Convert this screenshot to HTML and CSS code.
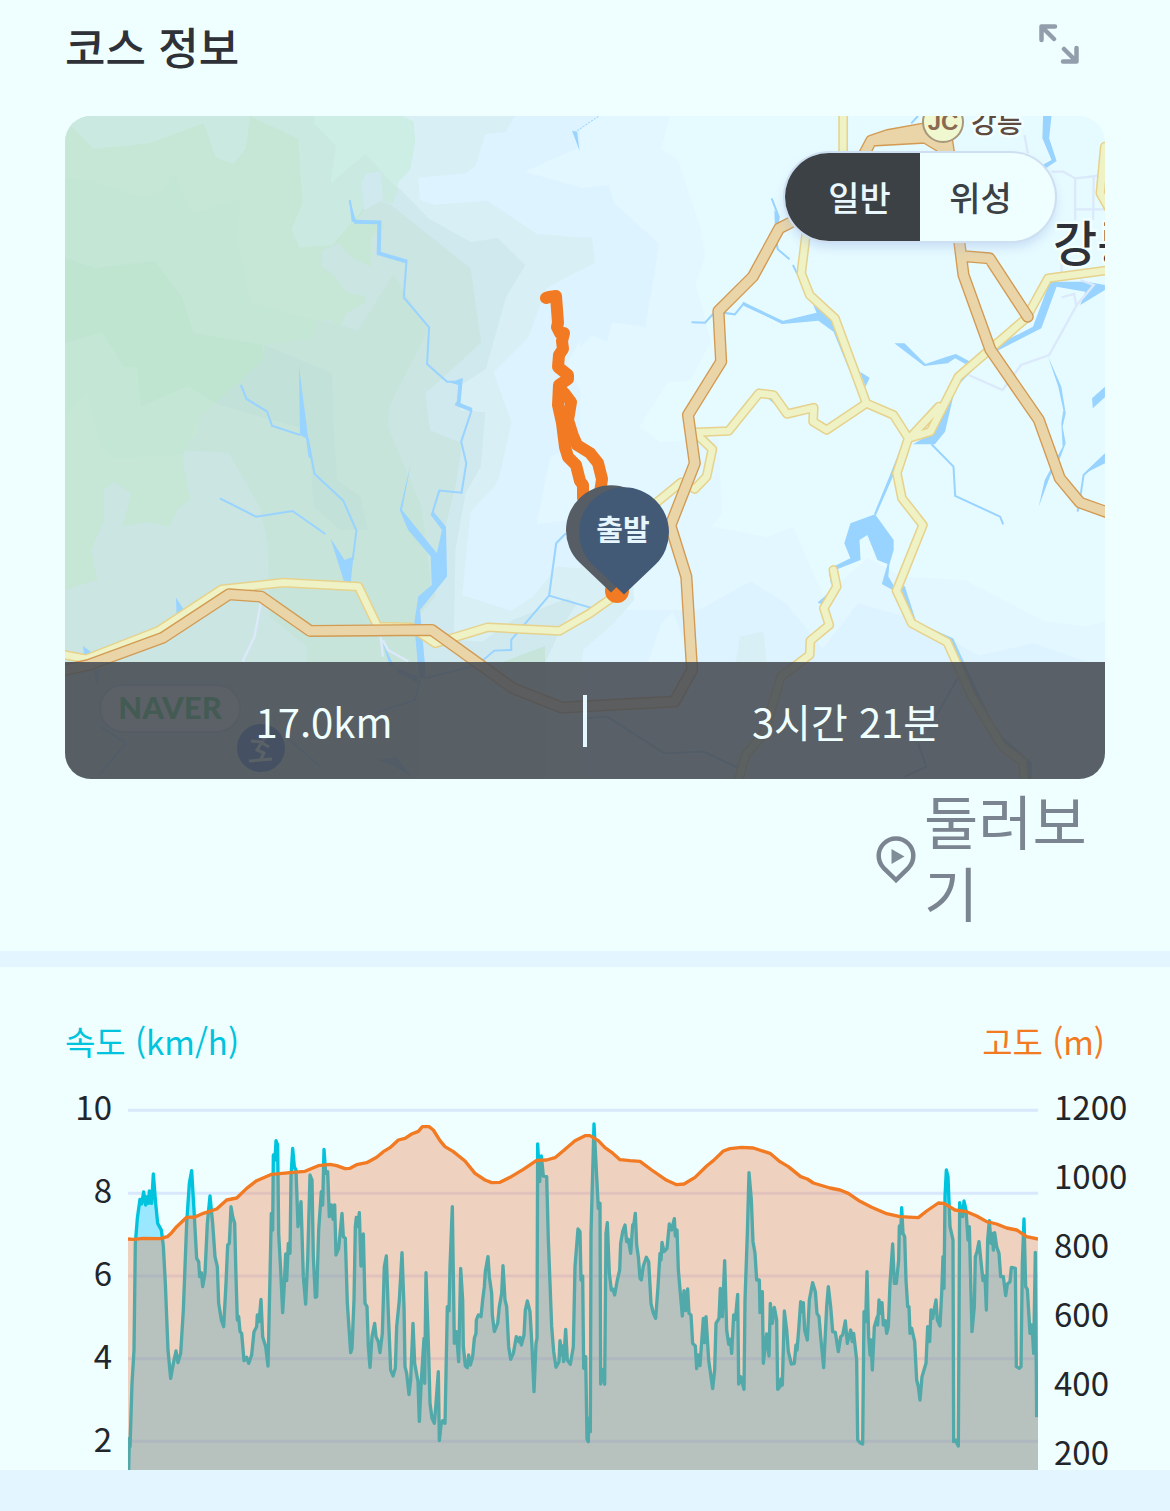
FILE: index.html
```html
<!DOCTYPE html>
<html lang="ko">
<head>
<meta charset="utf-8">
<meta name="viewport" content="width=device-width, initial-scale=1">
<title>코스 정보</title>
<link rel="stylesheet" href="styles.css">
</head>
<body>
<main>
<section class="course">
  <header class="course-head">
    <h2 class="title">코스 정보</h2>
    <button class="expand" type="button" aria-label="지도 확대">
      <svg width="40" height="40" viewBox="0 0 40 40" fill="none" stroke="#929eab" stroke-width="4.5" stroke-linecap="round" stroke-linejoin="round" aria-hidden="true">
        <path d="M2.5 16V2.500H16M3 3L15 15"/><path d="M37.500 24V37.500H24M37 37L25 25"/>
      </svg>
    </button>
  </header>

  <div class="map">
    <svg class="map-canvas" viewBox="65 116 1040 663" preserveAspectRatio="xMidYMid slice" aria-hidden="true">
      <defs>
        <g id="yellow-roads">
          <path d="M15 1635L78 1647L290 1563L478 1438L660 1418L883 1430L940 1550L1040 1552L1110 1600L1265 1552L1478 1563L1568 1510L1638 1460L1720 1380L1750 1190L1838 1117L1878 1137L1913 1100L1930 1018L1878 967L1978 963L2068 850L2111 855L2151 912L2230 893L2228 935L2268 960L2386 880"/>
          <path d="M2317 0V150M2210 350L2193 490L2218 555L2293 625L2386 880L2466 915L2510 985L2575 965L2658 800L2858 625L2923 505L3106 480M2513 985L2600 890"/>
          <path d="M3091 110L3078 250L3106 300M2510 985L2476 1090L2491 1165L2553 1245L2475 1442L2520 1540L2625 1597L2698 1760L2788 1910L2848 1955L2853 2010"/>
          <path d="M2288 1380L2298 1430L2260 1495L2276 1545L2220 1592L2218 1635L2133 1700L2083 1870L2028 1935L2008 2010"/>
        </g>
        <g id="orange-roads">
          <path d="M0 1683L85 1665L305 1583L500 1453L595 1460L740 1563L1100 1560L1340 1735L1485 1793L1818 1775L1870 1680L1853 1400L1806 1247L1878 1060L1858 915L1956 755L1948 603L2050 500L2128 355L2180 328"/>
          <path d="M2370 150L2400 92L2450 75L2570 53L2630 60M2400 92L2560 83L2620 120M2620 60L2632 140L2660 390L2673 495L2753 720L2896 930L2958 1105L3018 1178L3106 1210M2668 438L2750 445L2863 620"/>
        </g>
      </defs>
      <rect x="65" y="116" width="1040" height="663" fill="#e6fbff"/>

      <!-- terrain, east half -->
      <g transform="translate(580 110) scale(.338 .3333)">
        <path fill="#e2f7ff" d="M0 18H265L240 118L290 150L355 350L370 440L342 520L387 695L325 812L260 815L175 950L235 997L410 985L420 1210L390 1250L555 1282L630 1250L720 1460L850 1345L950 1400L1140 1412L1375 1535L1500 1550L1570 1530V2010H0Z"/>
        <path fill="#ddf3ff" d="M0 235L85 225L100 278L235 402L193 650L95 637L80 695L35 675L0 715ZM350 1500L505 1415L610 1480L718 1617L822 1480L980 1525L1180 1637L1340 1600L1570 1680V2010H0V1500ZM0 18H50L0 60Z"/>
        <path fill="#e2f7ff" d="M275 1505L240 1540L200 1660H330Z"/>
        <path fill="#d8f0f5" d="M0 382H35L45 458L0 482ZM0 1330L150 1330L160 1470L100 1540L10 1620L0 1700ZM473 1580L543 1565L555 1680H457Z"/>
      </g>

      <!-- terrain, west half -->
      <g transform="translate(60 110) scale(.338 .3333)">
        <path fill="#ddf3ff" d="M15 18H1539V2010H15Z"/>
        <path fill="#e2f7ff" d="M1375 185L1539 110V232ZM1539 690L1500 760L1539 840ZM1450 1040L1539 1000V1225L1410 1243Z"/>
        <path fill="#d8f0f5" d="M1000 18H1345L1320 65L1258 73L1230 168L1200 190L1060 203L1065 270L1110 284L1265 272L1410 371L1540 383V480L1440 535L1385 683L1283 787L1336 938L1300 1100L1285 1130L1215 1205L1190 1455L1335 1503L1400 1460L1470 1370L1540 1375V2010H15V18Z"/>
        <path fill="#d0e9ee" d="M905 132L1090 325L1215 396L1295 384L1377 466L1320 560L1260 777L1180 830V900L1258 907L1245 1070L1200 1150L1170 1320L1165 1590L1250 1595L1340 1530L1500 1465L1530 1480L1480 1560L1435 1660V2010H15V200H800Z"/>
        <path fill="#cae5e2" d="M925 265L980 285L1215 475L1246 698L1082 850L1095 960L1190 1000L1170 1130L1140 1250L1110 1460L1060 1520V2010H15V270Z"/>
        <path fill="#d0e9ee" d="M1180 810L1082 850L1095 960L1190 1000Z"/>
        <path fill="#c7e4db" d="M987 492L1090 660L975 885L970 950L1070 1190L1100 1450L1055 1500V1660H730V1610L620 1520L615 1300L590 1190L500 1030L360 1020L430 870L680 600L880 662ZM1300 1660L1435 1608V1660Z"/>
        <path fill="#c2e1d9" d="M605 705L805 790L810 960L820 1110L890 1160L910 1260L830 1260L750 1190L735 960L455 880L535 795Z"/>
        <path fill="#c6e7d6" d="M15 18H1010L1045 35L1050 95L1035 180L1000 215L985 280L925 265L875 335L965 345L920 380V470L860 440L825 400L775 420V470L815 500L845 545L905 560L900 580L845 610L830 650L800 630L760 632L745 685L685 680L675 605L640 615L605 690L600 750L535 795L460 880L410 920L405 975L360 1005L365 1060L385 1170L350 1195L325 1250L260 1235L185 1250L210 1150L160 1115L130 1140V1230L92 1320L110 1410L15 1440Z"/>
        <path fill="#cdeee5" d="M750 18H1010L1045 35L1050 95L1035 180L1000 215L985 280L905 132L800 222L815 108L750 40Z"/>
        <path fill="#c9e9e1" d="M15 18H562L550 115L513 163L460 140L425 40L265 100L100 117L30 45ZM562 18H750V40L815 108L800 222L905 132L1000 240L985 280L925 265L805 405L708 413L685 358L717 280L705 87Z"/>
        <path fill="#d0e9ee" d="M905 190L950 185L955 270L900 300L890 220Z"/>
        <path fill="#c3e6d5" d="M15 205H60L245 260L300 245L338 190L390 310L535 268L523 390L565 578L760 632L745 685L600 705V750L410 920L365 1035L165 1045L120 1010L80 850L15 920Z"/>
        <path fill="#bfe4d0" d="M15 445L105 475L280 453L360 560L395 670L600 705V750L460 880L380 828L240 888L228 772L190 770L125 665L15 700Z"/>
      </g>

      <g class="water" transform="translate(60 110) scale(.338 .3333)">
        <path class="stream wide" d="M870 335L945 337L943 430L1027 455M1170 880L1218 900"/>
        <path class="stream" d="M857 270L870 335M1025 455L1017 562L1092 652L1086 762L1145 815H1183L1178 880M1218 900L1187 995L1202 1060L1188 1148L1122 1142L1100 1215"/>
        <path d="M855 268L877 335H863ZM1155 818L1192 803L1185 880H1174L1178 825Z"/>
        <path d="M1105 1205L1142 1250L1145 1400L1065 1500L1080 1665V1705H1062L1048 1540L1060 1460L1100 1425L1097 1340L1030 1260L1005 1200L1037 1065L1012 1200L1115 1330L1130 1260L1097 1215Z"/>
        <path class="stream" d="M535 825L552 867L613 905L627 947L710 975M733 985L753 1092L838 1172L877 1262L866 1350M473 1165L580 1220L688 1203L785 1272"/>
        <path d="M707 770L734 980L746 1050L735 1040L728 985L710 975ZM800 1285L842 1350L868 1340L860 1420H842Z"/>
        <path class="stream" d="M1497 1270L1468 1300L1447 1457L1335 1590V1620L1285 1622L1235 1665L1080 1705M1447 1457L1600 1502"/>
        <path d="M343 1463L370 1505L345 1515ZM68 1608L100 1632L72 1640ZM955 1600L975 1665L1060 1700V1720L1000 1690ZM100 1680H117L110 1730Z"/>
        <path class="stream" d="M120 1850L195 1900L120 1990M1065 1710L1050 1770L930 1810M680 1890L770 1970"/>
        <path d="M1515 62L1530 65L1537 122ZM940 1950L995 1940L1040 2000L980 1965Z"/>
        <path class="stream dashed" d="M1530 62L1595 18"/>
      </g>
      <g class="water" transform="translate(580 110) scale(.338 .3333)">
        <path class="stream" d="M567 265L588 320L580 345M580 390L585 418L620 448M630 465L642 490M330 637L370 638L400 605L458 613L485 580L600 640M980 40L1000 18"/>
        <path d="M690 585L760 630L850 880H842L790 765L750 665L705 632L600 642L595 634L700 608ZM828 785L857 803L845 830ZM575 300L590 320L585 420L578 400ZM525 832L600 885L590 895L550 860ZM480 575L600 632V642L485 588Z"/>
        <path d="M930 700H960L1022 762L1085 740L1112 732L1155 755L1140 762L1110 745L1088 760L1018 768ZM1370 18H1395L1388 85L1410 153L1378 175L1368 165L1395 150L1368 85Z"/>
        <path d="M1390 515L1500 515L1553 525V540L1480 585L1495 545L1410 530L1365 655L1235 722V705L1340 650ZM1200 740L1110 835L1080 965L1050 1003H985L1040 970L1100 830Z"/>
        <path class="stream" d="M1040 1003L1105 1070L1110 1158L1243 1220L1252 1243M740 1390L745 1420M1553 1035L1490 1095L1478 1175L1472 1205"/>
        <path d="M950 1010L930 1090L876 1215L870 1212L915 1100ZM873 1213L928 1290V1320L915 1365L912 1400L930 1430L925 1440L893 1422L910 1362L880 1350L850 1275L827 1290L830 1350L755 1380L750 1370L800 1345L782 1300L800 1240ZM735 1450L703 1478L720 1485Z"/>
        <path d="M1385 740L1424 830L1437 910L1428 950L1437 1000L1420 1045L1390 1100L1357 1190L1375 1110L1428 1010L1424 940L1430 900L1415 830ZM1515 865L1553 830V862L1517 895ZM1490 1092L1553 1030V1060Z"/>
        <path class="stream wide" d="M955 1430L990 1540L1100 1590L1140 1680L1230 1870L1330 1960V2010"/>
        <path class="stream" d="M20 1825L80 1820L250 1930L365 1925L470 1975M1120 1700L1030 1860M1000 1900L1025 1970L960 2000"/>
      </g>

      <g class="lanes" transform="translate(580 110) scale(.338 .3333)">
        <path d="M1315 75L1325 130M1395 185H1430L1465 205V330M1465 205L1553 195M1520 200L1518 330M1465 298H1553M1425 460V500M1480 510L1520 525L1470 585L1388 735L1305 765L1250 840L1150 795M1425 562L1462 552L1468 585"/>
        <path d="M-938 1445L-963 1580L-998 1655M-590 1580L-583 1640M-583 1590L-568 1620L-508 1655"/>
      </g>

      <g transform="translate(60 110) scale(.338 .3333)" fill="none" stroke-linejoin="round" stroke-linecap="round">
        <use href="#yellow-roads" stroke="#e6d28c" stroke-width="29"/>
        <use href="#yellow-roads" stroke="#eef2c4" stroke-width="20"/>
        <use href="#orange-roads" stroke="#d39a52" stroke-width="36"/>
        <use href="#orange-roads" stroke="#e9d5a8" stroke-width="28"/>
      </g>

      <circle cx="943" cy="122" r="20" fill="#f0f8cf" stroke="#a8977c" stroke-width="2"/>
      <text class="jc" x="943" y="130" text-anchor="middle">JC</text>
      <text class="place small" x="971" y="133">강릉</text>
      <text class="place big" x="1053" y="261">강릉</text>

      <rect x="100" y="685" width="140" height="47" rx="23" fill="#e8fbff" stroke="#bcd" stroke-width="2"/>
      <text class="naver" x="170" y="719" text-anchor="middle">NAVER</text>
      <circle cx="261" cy="748" r="24" fill="#2a62d8"/>
      <circle cx="264" cy="737" r="3" fill="#dff"/>
      <path d="M249 761L272 759M251 741L262 742L257 750L264 753L261 759M262 743L269 747" stroke="#dff" stroke-width="3" fill="none"/>

      <g fill="none" stroke="#f27a22" stroke-width="12" stroke-linecap="round" stroke-linejoin="round">
        <path d="M546 298L549 297L556 296L558 323L557 327L560 333L564 333L562 341L563 349L559 355L558 367L568 375V379L559 385L558 405L562 423L565 447L568 457L576 465L580 481L583 485V498"/>
        <path d="M559 388L565 394L571 402L568 420L573 436L577 445L590 453L598 463L602 479L600 493"/>
      </g>
      <circle cx="617" cy="591" r="12" fill="#f27a22"/>
      <path fill="#565d64" d="M611 592.500L579 562A45 45 0 1 1 643 562Z"/>
      <path fill="#435a77" d="M624 594.500L592 564A45 45 0 1 1 656 564Z"/>
      <text class="start" x="623" y="541" text-anchor="middle">출발</text>
    </svg>

    <div class="toggle" role="group" aria-label="지도 종류">
      <button type="button" class="toggle-btn is-on" aria-pressed="true">일반</button>
      <button type="button" class="toggle-btn" aria-pressed="false">위성</button>
    </div>

    <div class="summary">
      <span class="summary-item">17.0km</span>
      <span class="summary-item">3시간 21분</span>
    </div>
  </div>

  <div class="tour-row">
    <a class="tour" href="#tour">
      <svg class="tour-icon" width="40" height="48" viewBox="0 0 40 48" aria-hidden="true">
        <path d="M20 44L7.500 31.800A17.300 17.300 0 1 1 32.500 31.800Z" fill="none" stroke="#7b8591" stroke-width="4.500"/>
        <path d="M15.500 13L28.500 20.500L15.500 28Z" fill="#7f8d99"/>
      </svg>
      <span class="tour-text">둘러보기</span>
    </a>
  </div>
</section>

<section class="stats">
  <div class="legend">
    <span class="legend-speed">속도 (km/h)</span>
    <span class="legend-height">고도 (m)</span>
  </div>
  <div class="chart">
    <ol class="axis axis-speed"><li>10</li><li>8</li><li>6</li><li>4</li><li>2</li></ol>
    <svg class="plot" viewBox="204 285 2730 1095" preserveAspectRatio="none" role="img" aria-label="속도와 고도 그래프">
      <path class="grid" d="M204 301H2934M204 550H2934M204 798H2934M204 1046H2934M204 1294H2934"/>
      <path id="speed-area" class="speed-area"/>
      <path id="speed-line" class="speed-line"/>
      <path id="height-area" class="height-area"/>
      <path id="height-line" class="height-line"/>
    </svg>
    <ol class="axis axis-height"><li>1200</li><li>1000</li><li>800</li><li>600</li><li>400</li><li>200</li></ol>
  </div>
</section>
</main>
<script src="chart.js"></script>
</body>
</html>
```
FILE: styles.css
```css
* { box-sizing: border-box; }

body {
  margin: 0;
  background: #e3f6ff;
  color: #2e3238;
  font-family: "Noto Sans CJK KR", "Noto Sans", sans-serif;
}

button {
  border: 0;
  padding: 0;
  background: none;
  font: inherit;
  color: inherit;
}

.course,
.stats {
  background: #efffff;
  padding: 0 65px;
}

.course { padding-bottom: 23px; }

.course-head {
  display: flex;
  justify-content: space-between;
  align-items: center;
  height: 116px;
  padding: 0 26px 24px 0;
}

.title {
  margin: 0;
  font-size: 44px;
  line-height: 60px;
  font-weight: 500;
}

.expand {
  width: 40px;
  height: 40px;
  margin-bottom: 4px;
}

.expand svg,
.map-canvas,
.plot { display: block; }

.map {
  position: relative;
  height: 663px;
  border-radius: 26px;
  overflow: hidden;
}

.map-canvas {
  width: 100%;
  height: 100%;
}

.water { fill: #99d3ff; }

.stream {
  fill: none;
  stroke: #99d3ff;
  stroke-width: 6;
}

.stream.wide { stroke-width: 12; }
.stream.dashed { stroke-width: 3; stroke-dasharray: 6 4; }

.lanes {
  fill: none;
  stroke: #dbe9fb;
  stroke-width: 7;
}

.jc {
  font: 700 24px "Liberation Sans", sans-serif;
  fill: #8a6b52;
}

.place {
  font-weight: 500;
  fill: #2e3238;
  stroke: #f2ffff;
  stroke-width: 5px;
  paint-order: stroke;
}

.place.small { font-size: 28px; fill: #5e4a40; }
.place.big { font-size: 48px; }

.naver {
  font: 900 31px Lato, sans-serif;
  fill: #1ec850;
}

.start {
  font-size: 29px;
  font-weight: 700;
  fill: #e6f6ff;
}

.toggle {
  position: absolute;
  top: 37px;
  right: 50px;
  display: flex;
  width: 270px;
  height: 88px;
  border-radius: 44px;
  overflow: hidden;
  background: #efffff;
  box-shadow: 0 0 0 2px #cfdff2, 0 6px 12px rgba(150, 175, 230, .4);
}

.toggle-btn {
  flex: 1;
  padding-right: 14px;
  font-size: 34px;
  line-height: 86px;
  font-weight: 500;
  color: #3c4146;
}

.toggle-btn.is-on {
  padding: 0 0 0 14px;
  background: #3c4146;
  color: #e9f8ff;
}

.summary {
  position: absolute;
  left: 0;
  right: 0;
  bottom: 0;
  display: flex;
  align-items: center;
  height: 117px;
  background: rgba(73, 78, 84, .89);
  color: #efffff;
  font-size: 40px;
  line-height: 52px;
}

.summary-item {
  flex: 1;
  text-align: center;
}

.summary-item + .summary-item { border-left: 4px solid #e6f8ff; }

.tour-row {
  display: flex;
  justify-content: flex-end;
  padding-top: 5px;
}

.tour {
  display: flex;
  align-items: center;
  gap: 8px;
  width: 229px;
  color: #7b8591;
  text-decoration: none;
}

.tour-icon {
  flex: none;
  margin-top: 8px;
}

.tour-text {
  font-size: 59px;
  line-height: 72px;
}

.stats {
  height: 503px;
  margin-top: 16px;
  padding-top: 44px;
  overflow: hidden;
}

.legend {
  display: flex;
  justify-content: space-between;
  font-size: 33px;
  line-height: 60px;
}

.legend-speed { color: #00c3de; }
.legend-height { color: #f27a22; }

.chart {
  display: grid;
  grid-template-columns: 47px 1fr 67px;
  column-gap: 16px;
  margin-right: -16px;
  padding-top: 12px;
}

.axis {
  margin: 0;
  padding: 0;
  list-style: none;
  color: #22262b;
  font-size: 33px;
}

.axis-speed {
  margin-top: -18px;
  text-align: right;
  line-height: 83px;
}

.axis-height {
  margin-top: -11px;
  line-height: 69px;
}

.plot {
  width: 100%;
  height: 365px;
  margin-top: 22px;
}

.grid {
  stroke: #d9e8fc;
  stroke-width: 9;
}

.speed-area {
  fill: #18c6ff;
  fill-opacity: .4;
}

.speed-line,
.height-line {
  fill: none;
  stroke: #00c3de;
  stroke-width: 10;
  stroke-linejoin: round;
}

.height-line { stroke: #f27a22; }

.height-area {
  fill: #ef7743;
  fill-opacity: .34;
}
```
FILE: chart.js
```js
const speed = [
  [0, 0, '206 1380 208 1285 210 1310 216 1120 222 1020 226 700 232 625 240 568 245 582 251 546 257 585 262 560 266 580 268 543 275 580 280 492 287 580 293 640 304 660 310 708 316 820 324 1020 332 1105 340 1060 348 1023 354 1058 362 1030 370 900 380 640 388 520 395 482 402 600 410 745 416 755 419 800 424 788 428 830 435 790 442 640 450 558 458 640 465 740 472 770 476 880 484 930 491 950 498 820 503 705 508 700 513 590 518 620 524 640 528 800 532 930 536 920 540 965 545 970 552 1052 560 1042 566 1060 575 1035 582 965 590 950 592 915 597 935 603 868 608 980 617 1010 624 1068 630 800 634 610 638 660 640 435 645 450 648 392 653 405 656 670 662 780 668 908 672 840 677 732 680 812 685 700 690 730 693 500 698 415 703 470 708 480 714 650 723 575 730 800 737 882 743 750 750 495 756 510 760 740 766 862 770 860 776 660 784 545 788 585 792 418 797 490 803 485 808 620 814 585 819 628 824 585 828 735 836 715 846 610 850 680 856 685 862 880 872 1028'],
  [870, 270, '6 745 12 600 16 380 19 352 23 380 28 338 33 498 40 402 45 610 51 620 55 740 60 802 66 710 74 670 78 710 85 725 90 758 97 700 103 500 109 468 115 640 122 810 129 828 136 805 140 680 148 600 156 458 162 620 165 800 170 820 177 884 182 840 189 670 194 790 204 845 208 964 214 840 222 715 224 850 228 518 236 760 240 910 246 955 253 970 258 910 265 815 268 1022 273 975 278 962 285 970 288 820 292 620 297 632 300 500 307 320 313 730 319 695 326 785 332 505 338 600 340 740 346 798 352 803 356 765 361 795 368 770 373 715 378 700 379 660 385 645 393 650 398 600 403 560 406 515 414 470 418 530 425 580 427 645 433 695 443 670 448 620 455 580 459 497 465 600 470 620 476 740 482 778 490 760 499 710 506 725 510 712 514 735 522 705 526 630 532 603 540 635 546 740 552 875 558 730 561 715 563 132 569 245 574 168 580 228 590 230 595 420 605 680 611 755 618 802 627 785 630 722 635 765 638 738 641 785 647 688 652 780 661 793 670 740 675 500 684 387 690 395 693 540 698 528 701 805 707 770 711 1018 715 1025 716 955 721 995 723 400 732 72'],
  [1560, 270, '50 230 55 325 60 310 62 852 67 808 74 853 78 400 82 368 88 520 94 570 99 568 104 585 112 540 119 510 122 430 128 395 135 375 140 425 145 418 152 460 158 375 162 370 166 340 170 435 175 470 180 535 184 540 190 498 199 472 206 485 213 610 220 640 227 655 234 560 240 460 243 480 246 427 252 455 261 445 268 372 275 390 283 356 286 408 291 390 295 510 307 648 312 572 317 632 323 567 327 640 333 645 338 730 346 738 350 806 355 765 360 797 370 655 374 728 378 650 386 780 398 866 404 810 408 670 417 655 421 565 427 650 434 482 440 690 446 733 451 718 455 760 461 645 466 658 473 583 476 852 482 830 492 868 495 600 502 400 507 218 514 300 519 425 525 460 530 540 538 540 540 638 547 575 550 790 560 702 567 768 571 610 577 670 583 622 590 660 593 868 600 860 603 837 607 855 613 633 620 690 625 755 634 792 643 790 648 735 651 750 656 690 662 605 666 635 670 608 674 690 682 720 688 600 698 548 706 575 711 640 717 650 722 710 731 803 740 620 745 560 752 620 758 695 766 697 775 755'],
  [2280, 0, '62 980 68 975 76 933 82 1000 92 960 97 995 101 970 110 1050 113 1290 120 1298 128 1302 132 905 137 935 141 785 146 980 150 1035 153 990 157 1080 163 950 172 920 173 945 177 870 181 910 186 878 190 945 196 932 200 970 205 950 210 820 218 702 223 820 229 820 236 750 238 648 242 670 245 593 249 670 254 680 258 810 263 890 267 890 270 970 275 955 284 995 290 1110 295 1130 300 1170 306 1100 318 1060 323 950 329 995 333 900 338 925 348 870 352 930 360 948 365 850 369 740 372 835 375 560 379 480 384 500 390 650 399 690 401 1295 406 1290 415 1308 419 578 423 600 428 620 432 573 438 600 444 690 448 650 453 850 456 965 463 890 466 740 471 725 477 695 483 755 489 812 495 798 499 900 503 690 508 632 513 700 518 670 520 720 524 668 530 710 537 730 542 800 550 800 557 857 562 822 570 815 574 772 586 775 589 1070 598 1075 603 1070 607 760 612 627 617 830 622 838 630 970 636 945 641 1030 646 727 650 1222']
];

const height = [
  [0, 0, '204 687 220 688 250 685 300 686 322 680 335 668 350 650 380 622 405 621 430 610 470 597 500 570 530 564 560 535 590 512 635 493 690 488 735 484 775 467 810 463 830 467 855 476'],
  [870, 270, '0 205 20 194 50 188 80 172 100 155 120 143 145 120 165 115 185 102 205 94 217 80 237 80 250 90 270 122 285 140 310 155 345 183 375 220 405 240 425 248 450 247 480 232 520 208 560 181 590 180 615 173 640 152 675 122 705 107 720 107 745 122 765 143'],
  [1560, 270, '95 157 120 179 150 182 180 184 215 210 260 241 290 254 312 252 345 232 380 198 400 182 430 153 450 146 485 142 520 144 570 160 600 185 625 200 662 230 682 237 700 249 750 264 780 270'],
  [2280, 0, '85 550 120 574 155 592 200 611 240 620 295 623 320 603 355 579 372 580 405 600 440 605 470 618 500 635 530 642 560 654 590 660 620 680 654 687']
];

const FLOOR = 1380;

function toPoints(laps) {
  return laps.flatMap(([dx, dy, samples]) => {
    const n = samples.split(' ').map(Number);
    const points = [];
    for (let i = 0; i < n.length; i += 2) points.push([n[i] + dx, n[i + 1] + dy]);
    return points;
  });
}

function draw(name, laps) {
  const points = toPoints(laps);
  const line = 'M' + points.map(p => p.join(' ')).join('L');
  const area = `${line}L2934 ${points[points.length - 1][1]}V${FLOOR}H204V${points[0][1]}Z`;
  document.getElementById(`${name}-line`).setAttribute('d', line);
  document.getElementById(`${name}-area`).setAttribute('d', area);
}

draw('speed', speed);
draw('height', height);
```
